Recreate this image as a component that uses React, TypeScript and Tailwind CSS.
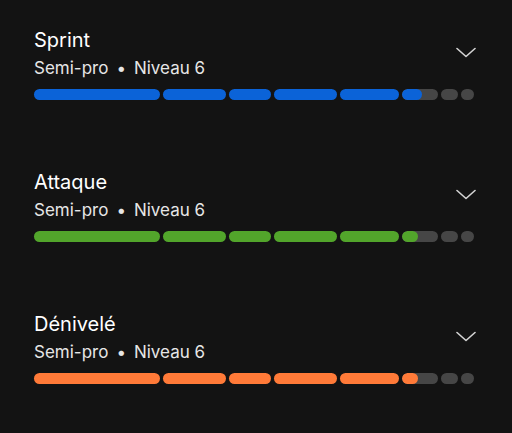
const SEGMENTS = [126, 63, 42, 63, 59, 36, 17, 13];

type Skill = {
  name: string;
  color: string;
  partial: number;
};

const skills: Skill[] = [
  { name: 'Sprint', color: 'bg-[#0b63d8]', partial: 20 },
  { name: 'Attaque', color: 'bg-[#52a52b]', partial: 16 },
  { name: 'Dénivelé', color: 'bg-[#ff7a38]', partial: 16 },
];

function Chevron() {
  return (
    <svg width="20" height="11" viewBox="0 0 20 11" fill="none" className="mt-[19px] -mr-px shrink-0">
      <path d="M1 1.5 L10 9.5 L19 1.5" stroke="#d4d4d4" strokeWidth="1.6" strokeLinecap="round" strokeLinejoin="round" />
    </svg>
  );
}

function ProgressBar({ color, partial }: { color: string; partial: number }) {
  return (
    <div className="flex gap-[3px] mt-[11px]">
      {SEGMENTS.map((w, i) => {
        const filled = i < 5;
        return (
          <div
            key={i}
            className={`h-[11px] rounded-full overflow-hidden shrink-0 ${filled ? color : 'bg-[#464646]'}`}
            style={{ width: w }}
          >
            {i === 5 && <div className={`h-full rounded-full ${color}`} style={{ width: partial }} />}
          </div>
        );
      })}
    </div>
  );
}

export default function App() {
  return (
    <div className="w-[512px] h-[433px] bg-[#131313] pl-[34px] pr-[37px] pt-[28px] font-['Inter',sans-serif] flex flex-col gap-[70.7px]">
      {skills.map((s) => (
        <div key={s.name}>
          <div className="flex justify-between items-start">
            <div>
              <div className="text-[20px] leading-[24px] text-white">{s.name}</div>
              <div className="mt-[5.5px] text-[17px] leading-[20px] text-[#e6e6e6]">
                Semi-pro<span className="mx-[8px]">•</span>Niveau 6
              </div>
            </div>
            <Chevron />
          </div>
          <ProgressBar color={s.color} partial={s.partial} />
        </div>
      ))}
    </div>
  );
}
